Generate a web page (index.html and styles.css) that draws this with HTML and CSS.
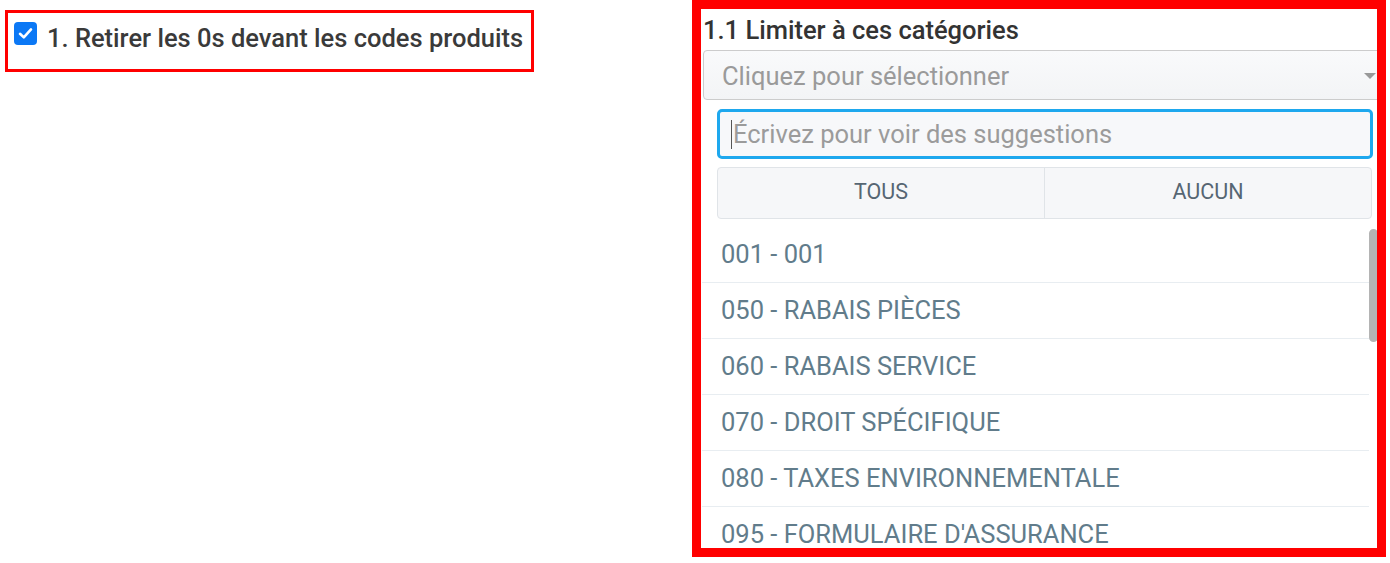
FILE: index.html
```html
<!DOCTYPE html>
<html lang="fr">
<head>
<meta charset="UTF-8">
<meta name="viewport" content="width=device-width, initial-scale=1.0">
<title>Options d'import</title>
<link rel="stylesheet" href="styles.css">
</head>
<body>
    <div id="page">
        <!-- option 1 -->
        <div class="option-box">
            <span class="check">
                <svg width="15" height="13" viewBox="0 0 15 13"><path d="M2 6.8 L5.8 10.4 L13 2.4" fill="none" stroke="#ffffff" stroke-width="2.6" stroke-linecap="round" stroke-linejoin="round"/></svg>
            </span>
            <span class="option-label">1. Retirer les 0s devant les codes produits</span>
        </div>

        <!-- option 1.1 : categories -->
        <div class="category-box">
            <div class="field-label">1.1 Limiter à ces catégories</div>
            <div class="select">
                <span class="select-placeholder">Cliquez pour sélectionner</span>
                <span class="select-arrow"></span>
            </div>
            <div class="dropdown">
                <div class="search">
                    <span class="caret"></span>
                    <span class="search-placeholder">Écrivez pour voir des suggestions</span>
                </div>
                <div class="actions">
                    <button class="action">TOUS</button>
                    <button class="action">AUCUN</button>
                </div>
                <div class="list">
                    <ul class="rows">
                        <li>001 - 001</li>
                        <li>050 - RABAIS PIÈCES</li>
                        <li>060 - RABAIS SERVICE</li>
                        <li>070 - DROIT SPÉCIFIQUE</li>
                        <li>080 - TAXES ENVIRONNEMENTALE</li>
                        <li>095 - FORMULAIRE D'ASSURANCE</li>
                    </ul>
                    <div class="scroll-track"><div class="scroll-thumb"></div></div>
                </div>
            </div>
        </div>
    </div>
</body>
</html>
```

FILE: styles.css
```css
body {
    font-family: Roboto, 'Liberation Sans', Arial, sans-serif;
    background-color: #ffffff;
    margin: 0;
}
#page {
    display: flex;
    justify-content: space-between;
    align-items: flex-start;
    padding: 0 4px 0 5px;
    height: 563px;
    overflow: hidden;
}

/* option 1 */
.option-box {
    box-sizing: border-box;
    width: 529px;
    height: 62px;
    margin-top: 10px;
    border: 3px solid #ff0000;
    display: flex;
    align-items: flex-start;
    padding: 9px 0 0 6px;
}
.check {
    width: 23px;
    height: 23px;
    border-radius: 4px;
    background-color: #0b78f5;
    display: flex;
    align-items: center;
    justify-content: center;
    flex-shrink: 0;
}
.option-label {
    margin-left: 10px;
    font-size: 25.5px;
    font-weight: 500;
    line-height: 26px;
    color: #3a3a3a;
    margin-top: 3px;
    white-space: nowrap;
}

/* option 1.1 */
.category-box {
    box-sizing: border-box;
    width: 694px;
    height: 557px;
    border: 9px solid #ff0000;
    overflow: hidden;
}
.field-label {
    margin: 8px 0 0 2px;
    font-size: 25.5px;
    font-weight: 500;
    line-height: 26px;
    color: #333333;
    white-space: nowrap;
}
.select {
    box-sizing: border-box;
    width: 685px;
    height: 50px;
    margin: 7px 0 0 2px;
    border: 1px solid #cccccc;
    border-radius: 4px;
    background: linear-gradient(#f9fafb, #f3f4f6);
    display: flex;
    align-items: center;
    justify-content: space-between;
    padding: 1px 11px 0 18px;
}
.select-placeholder {
    font-size: 25.5px;
    color: #9a9a9a;
}
.select-arrow {
    width: 0;
    height: 0;
    border-left: 6px solid transparent;
    border-right: 6px solid transparent;
    border-top: 6px solid #999999;
}
.dropdown {
    width: 686px;
    margin-left: 1px;
}
.search {
    box-sizing: border-box;
    height: 50px;
    margin: 9px 15px 0 15px;
    border: 3px solid #1ea8ee;
    border-radius: 5px;
    background-color: #f7f8fa;
    display: flex;
    align-items: center;
    padding-left: 11px;
}
.caret {
    width: 1px;
    height: 29px;
    background-color: #555555;
    margin-right: 1px;
}
.search-placeholder {
    font-size: 25.5px;
    color: #9b9b9b;
}
.actions {
    box-sizing: border-box;
    height: 52px;
    margin: 8px 16px 0 15px;
    display: flex;
    border: 1px solid #e0e4e8;
    border-radius: 4px;
    background-color: #f6f7f9;
}
.action {
    flex: 1;
    border: none;
    background: none;
    font-family: Roboto, 'Liberation Sans', Arial, sans-serif;
    font-size: 21.5px;
    color: #566673;
    padding: 0 0 3px 0;
}
.action + .action {
    border-left: 1px solid #e0e4e8;
}
.list {
    display: flex;
    width: 676px;
    margin-top: 8px;
}
.rows {
    flex: 1;
    list-style: none;
    margin: 0;
    padding: 0;
}
.rows li {
    height: 55px;
    border-bottom: 1px solid #e8edf1;
    padding-left: 19px;
    font-size: 25.5px;
    line-height: 54px;
    color: #617c8b;
    white-space: nowrap;
}
.scroll-track {
    width: 9px;
}
.scroll-thumb {
    height: 113px;
    margin-top: 2px;
    border-radius: 5px;
    background-color: #b4b4b4;
}
```
